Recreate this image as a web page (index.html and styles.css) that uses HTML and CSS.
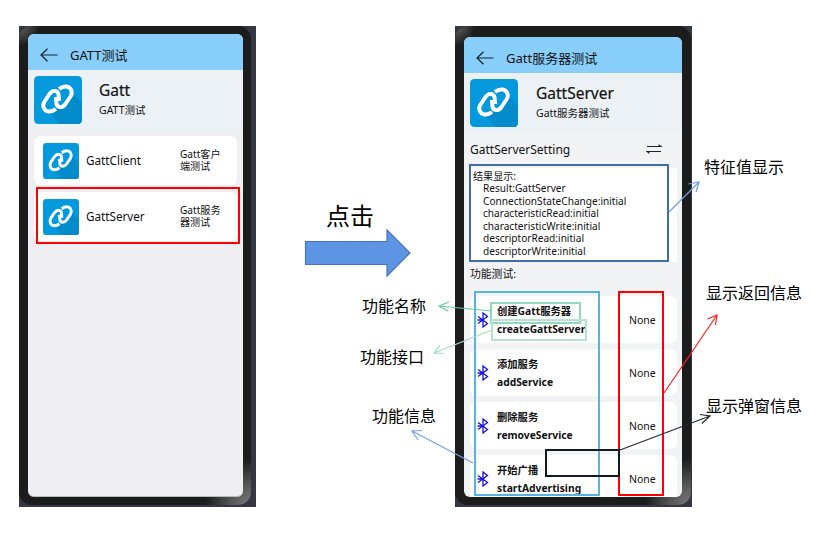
FILE: index.html
```html
<!DOCTYPE html>
<html lang="zh-CN">
<head>
<meta charset="utf-8">
<title>GATT测试</title>
<link rel="stylesheet" href="styles.css">
</head>
<body>
<svg class="defs" width="0" height="0" aria-hidden="true">
  <defs>
    <symbol id="logo" viewBox="0 0 48 48">
      <rect width="48" height="48" rx="4.5" fill="#0399dc"/>
      <path d="M13 35 L26 48 H43.500 Q48 48 48 43.500 V27 L38 17 L28 32 Z" fill="#048bcc"/>
      <g fill="none" stroke="#fff" stroke-width="3.900" stroke-linecap="butt" stroke-linejoin="round">
        <path d="M22 33 C17 37 11.500 36 9.800 32 C8.800 29.500 9.200 27.500 10.500 25.500 L15.500 18 C18.500 13.800 23 14 24.500 18 L25.200 25"/>
        <path d="M25 13 C30 9 35.500 10 37.200 14 C38.200 16.500 37.800 18.500 36.500 20.500 L31.500 28 C28.500 32.200 24 32 22.500 28 L21.800 21"/>
      </g>
    </symbol>
    <symbol id="back" viewBox="0 0 18 14">
      <path d="M17.500 7 H1 M7.500 .7 L1 7 L7.500 13.300" fill="none" stroke="#17242c" stroke-width="1.200"/>
    </symbol>
    <symbol id="bt" viewBox="0 0 12 16">
      <path d="M1 4.500 L10.500 11.500 L6 15 V1 L10.500 4.500 L1 11.500 M.5 8 H6" fill="none" stroke="#1414d8" stroke-width="1.300"/>
    </symbol>
  </defs>
</svg>
<main class="board">
  <section class="phone phone-left">
    <div class="shell"><div class="screen">
      <header class="bar"><svg class="back"><use href="#back"/></svg><span class="bar-title">GATT测试</span></header>
      <div class="hero"><svg class="logo"><use href="#logo"/></svg>
        <div class="hero-text"><h1>Gatt</h1><p>GATT测试</p></div></div>
      <div class="entries">
        <div class="entry"><svg class="mini"><use href="#logo"/></svg><span class="name">GattClient</span><span class="desc">Gatt客户<br>端测试</span></div>
        <div class="entry"><svg class="mini"><use href="#logo"/></svg><span class="name">GattServer</span><span class="desc">Gatt服务<br>器测试</span></div>
      </div>
    </div></div>
  </section>
  <section class="phone phone-right">
    <div class="shell"><div class="screen">
      <header class="bar"><svg class="back"><use href="#back"/></svg><span class="bar-title">Gatt服务器测试</span></header>
      <div class="hero"><svg class="logo"><use href="#logo"/></svg>
        <div class="hero-text"><h1>GattServer</h1><p>Gatt服务器测试</p></div></div>
      <div class="setting"><span>GattServerSetting</span>
        <svg width="16" height="10" viewBox="0 0 16 10"><path d="M1 2.500 H15 L12.500 .8 M15 7.500 H1 L3.500 9.200" fill="none" stroke="#222" stroke-width="1.200"/></svg></div>
      <div class="result">
        <p class="result-title">结果显示:</p>
        <p>Result:GattServer</p><p>ConnectionStateChange:initial</p><p>characteristicRead:initial</p><p>characteristicWrite:initial</p><p>descriptorRead:initial</p><p>descriptorWrite:initial</p>
      </div>
      <p class="section">功能测试:</p>
      <div class="functions">
        <div class="func"><svg class="bt"><use href="#bt"/></svg><div class="func-text"><b>创建Gatt服务器</b><b>createGattServer</b></div><span class="none">None</span></div>
        <div class="func"><svg class="bt"><use href="#bt"/></svg><div class="func-text"><b>添加服务</b><b>addService</b></div><span class="none">None</span></div>
        <div class="func"><svg class="bt"><use href="#bt"/></svg><div class="func-text"><b>删除服务</b><b>removeService</b></div><span class="none">None</span></div>
        <div class="func"><svg class="bt"><use href="#bt"/></svg><div class="func-text"><b>开始广播</b><b>startAdvertising</b></div><span class="none">None</span></div>
      </div>
    </div></div>
  </section>
  <svg class="notes" width="827" height="557" viewBox="0 0 827 557">
    <g fill="none" stroke-width="2">
      <rect x="37" y="188" width="202" height="55" stroke="#f00"/>
      <rect x="470" y="165" width="198" height="96" stroke="#416cab"/>
      <rect x="491" y="303" width="89" height="20" stroke="#91d9bb"/>
      <rect x="492" y="320" width="94" height="20" stroke="#b2e4d0"/>
      <rect x="475" y="292" width="124" height="203" stroke="#56b4e3"/>
      <rect x="619" y="292" width="44" height="203" stroke="#f00"/>
      <rect x="546" y="450" width="73" height="26" stroke="#111827"/>
    </g>
    <g fill="none" stroke-width="1.200">
      <path d="M669 212 L699 182 M688.500 184 L699 182 L696 192" stroke="#6f9fe4"/>
      <path d="M664 393 L717 315 M707.500 319 L717 315 L715.500 325" stroke="#f22"/>
      <path d="M620 450 L710 416 M700 414.500 L710 416 L702 423.500" stroke="#262a3c"/>
      <path d="M491 311 L439 306 M449 302 L439 306 L448 311" stroke="#6ccb9f"/>
      <path d="M492 330 L434 353 M440 345 L434 353 L444 353.500" stroke="#a1dfc4"/>
      <path d="M473 463 L412 431 M422 430.500 L412 431 L418 440" stroke="#74a3e3"/>
    </g>
    <path d="M305.500 241.500 H387 V230 L410 253 L387 276 V264.500 H305.500 Z" fill="#5e94e4" stroke="#4875b5" stroke-width="1.200"/>
    <g class="labels">
      <text class="click" x="326" y="225">点击</text>
      <text x="362" y="312">功能名称</text>
      <text x="360" y="363">功能接口</text>
      <text x="372" y="422">功能信息</text>
      <text x="704" y="173">特征值显示</text>
      <text x="706" y="299">显示返回信息</text>
      <text x="706" y="412">显示弹窗信息</text>
    </g>
  </svg>
</main>
</body>
</html>
```
FILE: styles.css
```css
* { box-sizing: border-box; }
body { margin: 0; background: #fff; color: #111; font-family: "Noto Sans", "Noto Sans CJK SC", sans-serif; }
h1, p { margin: 0; font-weight: 400; }
svg { display: block; flex: none; }
.defs { position: absolute; }
.board { position: relative; width: 827px; height: 557px; padding: 26px 0 0 19px; display: flex; gap: 199px; overflow: hidden; }
.phone { width: 237px; height: 481px; background: #323743; flex: none; }
.shell { width: 232px; height: 479px; border-radius: 13px; padding: 8px 8px 8px 9px; background: radial-gradient(circle at 100% 100%, #777 0, #5c5c5c 18px, #1c1c1c00 46px), radial-gradient(circle at 0 0, #666 0, #1c1c1c00 20px), #1c1c1c; }
.screen { height: 463px; border-radius: 6px; overflow: hidden; background: #eeeef3; border-bottom: 1px solid #bbb; }
.bar { height: 36px; background: #87cefa; display: flex; align-items: center; padding: 5px 0 0 12px; }
.back { width: 18px; height: 14px; }
.bar-title { font-size: 13px; margin-left: 12px; white-space: nowrap; }
.hero { height: 60px; background: #ecf1f5; display: flex; padding: 6px 0 0 6px; }
.logo { width: 48px; height: 48px; }
.hero-text { margin-left: 17px; white-space: nowrap; }
h1 { font-size: 15.500px; line-height: 18px; margin-top: 5px; -webkit-text-stroke: .2px #111; }
.hero-text p { font-size: 10.500px; line-height: 13px; margin-top: 5px; }
.entries { padding: 6px 6px 0; display: grid; gap: 7px; }
.entry { height: 49px; background: #fff; border-radius: 6px; display: flex; align-items: center; padding-left: 9px; }
.mini { width: 36px; height: 36px; }
.name { width: 101px; padding: 0 0 1px 7px; font-size: 11.700px; }
.desc { font-size: 10.100px; line-height: 12px; padding-bottom: 1px; white-space: nowrap; }
.phone-right .shell { padding: 11px 9px 8px 9px; width: 236px; }
.phone-right .screen { height: 460px; background: #f1f3f5; border-bottom: 0; }
.phone-right .bar { padding-left: 12px; }
.phone-right .hero { padding-left: 6px; }
.phone-right .hero-text { margin-left: 18px; }
.setting { display: flex; justify-content: space-between; align-items: center; padding: 0 20px 2px 6px; height: 34px; font-size: 12px; }
.result { height: 94px; margin: 1px 5px 0 6px; padding: 0 3px; background: #fff; font-size: 10.100px; line-height: 12.500px; white-space: nowrap; }
.result p { padding-left: 10px; }
.result .result-title { padding: 0; height: 14px; line-height: 16px; }
.section { padding-left: 6px; height: 34px; line-height: 23px; font-size: 10.800px; }
.functions { padding: 0 5px 0 6px; display: grid; gap: 6px; }
.func { height: 47px; background: #fff; border-radius: 7px; display: flex; align-items: center; padding-left: 7px; }
.bt { width: 12px; height: 16px; }
.func-text { width: 140px; padding-left: 8px; font-size: 10.300px; line-height: 18px; white-space: nowrap; }
.func-text b { display: block; }
.none { font-size: 10.500px; }
.notes { position: absolute; left: 0; top: 0; }
.labels { font-family: "Noto Sans CJK SC", sans-serif; font-size: 16px; font-weight: 400; fill: #000; }
.labels .click { font-size: 24px; }
```
